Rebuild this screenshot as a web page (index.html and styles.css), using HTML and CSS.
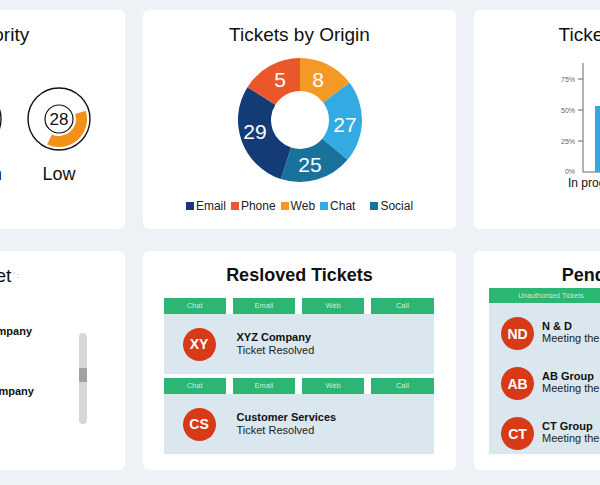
FILE: index.html
```html
<!DOCTYPE html>
<html lang="en">
<head>
  <meta charset="UTF-8" />
  <title>Helpdesk Dashboard</title>
  <link rel="stylesheet" href="styles.css">
</head>
<body>
<div class="board">

  <!-- priority -->
  <div class="card">
    <h2 class="title title-priority">Ticket Priority</h2>
    <div class="gauges">
      <div class="gauge">
        <svg width="64" height="64" viewBox="0 0 64 64">
          <circle cx="32" cy="32" r="31" fill="white" stroke="#111" stroke-width="1.4"/>
          <path d="M32,4 A28,28 0 0 1 46,56.25 L40.5,46.72 A17,17 0 0 0 32,15 Z" fill="#f39019"/>
          <circle cx="32" cy="32" r="14" fill="white" stroke="#111" stroke-width="1.2"/>
          <text x="32" y="32" class="gauge-num">41</text>
        </svg>
        <div class="gauge-label">High</div>
      </div>
      <div class="gauge">
        <svg width="64" height="64" viewBox="0 0 64 64">
          <circle cx="32" cy="32" r="31" fill="white" stroke="#111" stroke-width="1.4"/>
          <path d="M22.42,58.31 A28,28 0 0 1 18,7.75 L23.5,17.28 A17,17 0 0 0 26.19,47.97 Z" fill="#f39019"/>
          <circle cx="32" cy="32" r="14" fill="white" stroke="#111" stroke-width="1.2"/>
          <text x="32" y="32" class="gauge-num">25</text>
        </svg>
        <div class="gauge-label">Medium</div>
      </div>
      <div class="gauge">
        <svg width="64" height="64" viewBox="0 0 64 64">
          <circle cx="32" cy="32" r="31" fill="white" stroke="#111" stroke-width="1.4"/>
          <path d="M58.78,23.81 A28,28 0 0 1 20.17,57.38 L24.82,47.41 A17,17 0 0 0 48.26,27.03 Z" fill="#f39019"/>
          <circle cx="32" cy="32" r="14" fill="white" stroke="#111" stroke-width="1.2"/>
          <text x="32" y="32" class="gauge-num">28</text>
        </svg>
        <div class="gauge-label">Low</div>
      </div>
    </div>
  </div>

  <!-- origin donut -->
  <div class="card">
    <h2 class="title">Tickets by Origin</h2>
    <svg class="donut" width="130" height="130" viewBox="0 0 130 130">
      <path d="M65,3 A62,62 0 0 1 114.51,27.69 L88.16,47.55 A29,29 0 0 0 65,36 Z" fill="#f39a26"/>
      <path d="M114.51,27.69 A62,62 0 0 1 112.49,104.85 L87.21,83.64 A29,29 0 0 0 88.16,47.55 Z" fill="#33abe2"/>
      <path d="M112.49,104.85 A62,62 0 0 1 45.84,123.97 L56.04,92.58 A29,29 0 0 0 87.21,83.64 Z" fill="#18729c"/>
      <path d="M45.84,123.97 A62,62 0 0 1 12.42,32.15 L40.41,49.63 A29,29 0 0 0 56.04,92.58 Z" fill="#133c76"/>
      <path d="M12.42,32.15 A62,62 0 0 1 65,3 L65,36 A29,29 0 0 0 40.41,49.63 Z" fill="#e9572b"/>
      <text x="45" y="24" class="slice-num">5</text>
      <text x="83" y="24" class="slice-num">8</text>
      <text x="110" y="69" class="slice-num">27</text>
      <text x="75" y="109" class="slice-num">25</text>
      <text x="20" y="76" class="slice-num">29</text>
    </svg>
    <div class="legend">
      <span class="key"><i class="sq email"></i>Email</span>
      <span class="key"><i class="sq phone"></i>Phone</span>
      <span class="key"><i class="sq web"></i>Web</span>
      <span class="key"><i class="sq chat"></i>Chat</span>
      <span class="key last"><i class="sq social"></i>Social</span>
    </div>
  </div>

  <!-- status bars -->
  <div class="card">
    <h2 class="title">Tickets by Status</h2>
    <div class="chart">
      <svg width="230" height="135" viewBox="0 0 230 135">
        <text x="15" y="24" class="tick">75%</text>
        <text x="15" y="55" class="tick">50%</text>
        <text x="15" y="86" class="tick">25%</text>
        <text x="15" y="116" class="tick">0%</text>
        <line x1="18" y1="24" x2="23" y2="24" stroke="#666"/>
        <line x1="18" y1="55" x2="23" y2="55" stroke="#666"/>
        <line x1="18" y1="86" x2="23" y2="86" stroke="#666"/>
        <line x1="23" y1="8" x2="23" y2="117" stroke="#666"/>
        <line x1="23" y1="117" x2="230" y2="117" stroke="#666"/>
        <rect x="35" y="51" width="34" height="66" fill="#33a9df"/>
        <rect x="105" y="70" width="34" height="47" fill="#33a9df"/>
        <rect x="175" y="90" width="34" height="27" fill="#33a9df"/>
        <text x="8" y="132" class="bar-name">In progress</text>
        <text x="100" y="132" class="bar-name">Resolved</text>
        <text x="170" y="132" class="bar-name">Pending</text>
      </svg>
    </div>
  </div>

  <!-- new tickets -->
  <div class="card">
    <h2 class="title">New Ticket<span class="dots">ʼ :</span></h2>
    <div class="new-body">
      <div class="new-list">
        <div class="new-item">
          <div class="avatar">AC</div>
          <div>
            <div class="name">ABC Company</div>
            <div class="sub">Raised</div>
          </div>
        </div>
        <div class="new-item">
          <div class="avatar">MC</div>
          <div>
            <div class="name">MNO Company</div>
            <div class="sub">Raised</div>
          </div>
        </div>
      </div>
      <div class="scroll"><div class="thumb"></div></div>
    </div>
  </div>

  <!-- resolved -->
  <div class="card">
    <h2 class="title bold">Resloved Tickets</h2>
    <div class="resolved">
      <div class="tabs">
        <span>Chat</span><span>Email</span><span>Web</span><span>Call</span>
      </div>
      <div class="panel">
        <div class="avatar">XY</div>
        <div>
          <div class="name">XYZ Company</div>
          <div class="sub">Ticket Resolved</div>
        </div>
      </div>
      <div class="tabs">
        <span>Chat</span><span>Email</span><span>Web</span><span>Call</span>
      </div>
      <div class="panel">
        <div class="avatar">CS</div>
        <div>
          <div class="name">Customer Services</div>
          <div class="sub">Ticket Resolved</div>
        </div>
      </div>
    </div>
  </div>

  <!-- pending -->
  <div class="card">
    <h2 class="title bold">Pending Tickets</h2>
    <div class="pending">
      <div class="tabs tabs-two">
        <span>Unauthorised Tickets</span><span>Authorised Tickets</span>
      </div>
      <div class="pending-list">
        <div class="pend-item">
          <div class="avatar">ND</div>
          <div>
            <div class="name">N &amp; D</div>
            <div class="sub">Meeting the deadline</div>
          </div>
        </div>
        <div class="pend-item">
          <div class="avatar">AB</div>
          <div>
            <div class="name">AB Group</div>
            <div class="sub">Meeting the deadline</div>
          </div>
        </div>
        <div class="pend-item">
          <div class="avatar">CT</div>
          <div>
            <div class="name">CT Group</div>
            <div class="sub">Meeting the deadline</div>
          </div>
        </div>
      </div>
    </div>
  </div>

</div>
</body>
</html>
```

FILE: styles.css
```css
body {
  margin: 0;
  background-color: #eef1f5;
  font-family: "Liberation Sans", Arial, sans-serif;
  color: #111;
  overflow: hidden;
}
.board {
  display: grid;
  grid-template-columns: repeat(3, 313px);
  grid-auto-rows: 219px;
  column-gap: 18px;
  row-gap: 22px;
  margin: 10px 0 0 -188px;
}
.card {
  background-color: white;
  border-radius: 6px;
  padding-top: 13px;
  box-sizing: border-box;
  overflow: hidden;
}
.title {
  margin: 0;
  font-size: 19px;
  font-weight: normal;
  line-height: 23px;
  text-align: center;
  white-space: nowrap;
}
.title.bold {
  font-size: 18px;
  font-weight: bold;
}
.title-priority {
  padding-left: 7px;
}
.dots {
  font-size: 7px;
  color: #888;
  vertical-align: top;
  margin-left: 2px;
}

/* gauges */
.gauges {
  display: flex;
  justify-content: center;
  margin-top: 41px;
  padding-left: 3px;
}
.gauge {
  width: 89px;
  display: flex;
  flex-direction: column;
  align-items: center;
}
.gauge svg {
  display: block;
}
.gauge-num {
  font-size: 17px;
  text-anchor: middle;
  dominant-baseline: central;
  fill: #111;
}
.gauge-label {
  margin-top: 12px;
  font-size: 18px;
  line-height: 22px;
}

/* donut */
.donut {
  display: block;
  margin: 9px auto 0;
}
.slice-num {
  font-size: 21px;
  fill: white;
  text-anchor: middle;
  dominant-baseline: central;
}
.legend {
  display: flex;
  justify-content: center;
  gap: 5px;
  margin-top: 14px;
  font-size: 12px;
  line-height: 14px;
  color: #222;
}
.key {
  display: flex;
  align-items: center;
}
.key.last {
  margin-left: 10px;
}
.sq {
  width: 8px;
  height: 8px;
  margin-right: 2px;
}
.email { background-color: #133c76; }
.phone { background-color: #e9572b; }
.web { background-color: #f39a26; }
.chat { background-color: #33abe2; }
.social { background-color: #18729c; }

/* bars */
.chart {
  margin-top: 9px;
  padding-left: 86px;
}
.chart svg {
  display: block;
}
.tick {
  font-size: 7px;
  fill: #666;
  text-anchor: end;
  dominant-baseline: central;
}
.bar-name {
  font-size: 12px;
  fill: #111;
}

/* shared list bits */
.avatar {
  width: 33px;
  height: 33px;
  border-radius: 50%;
  background-color: #d83a18;
  color: white;
  font-weight: bold;
  font-size: 14px;
  display: flex;
  align-items: center;
  justify-content: center;
  flex-shrink: 0;
}
.name {
  font-size: 11px;
  font-weight: bold;
  line-height: 13px;
  color: #111;
}
.sub {
  font-size: 11px;
  line-height: 13px;
  color: #222;
}

/* new tickets */
.new-body {
  display: flex;
  justify-content: space-between;
}
.new-list {
  padding: 34px 0 0 95px;
  display: flex;
  flex-direction: column;
  gap: 27px;
}
.new-item {
  display: flex;
  align-items: center;
  gap: 15px;
}
.scroll {
  width: 8px;
  height: 91px;
  margin: 46px 38px 0 0;
  border-radius: 4px;
  background-color: #d6d6d6;
  padding-top: 35px;
  box-sizing: border-box;
}
.thumb {
  height: 14px;
  background-color: #a2a2a2;
}

/* resolved */
.resolved {
  width: 270px;
  margin: 11px auto 0;
  padding-right: 2px;
}
.tabs {
  display: grid;
  grid-template-columns: repeat(4, 1fr);
  gap: 7px;
}
.tabs span {
  background-color: #2bb673;
  color: rgba(255, 255, 255, 0.75);
  font-size: 7.5px;
  line-height: 16px;
  height: 16px;
  text-align: center;
}
.panel {
  height: 60px;
  margin-bottom: 4px;
  background-color: #dae7ee;
  display: flex;
  align-items: center;
  padding-left: 19px;
  gap: 21px;
}

/* pending */
.pending {
  margin: 1px 15px 0;
}
.tabs.tabs-two {
  grid-template-columns: 124px 1fr;
}
.tabs.tabs-two span {
  height: 15px;
  line-height: 15px;
  font-size: 7px;
}
.pending-list {
  height: 151px;
  background-color: #dae7ee;
  padding: 14px 0 0 12px;
  box-sizing: border-box;
  display: flex;
  flex-direction: column;
  gap: 17px;
}
.pend-item {
  display: flex;
  align-items: center;
  gap: 8px;
}
.pend-item .name {
  line-height: 12px;
  margin-top: -4px;
}
.pend-item .sub {
  line-height: 12px;
}
```
